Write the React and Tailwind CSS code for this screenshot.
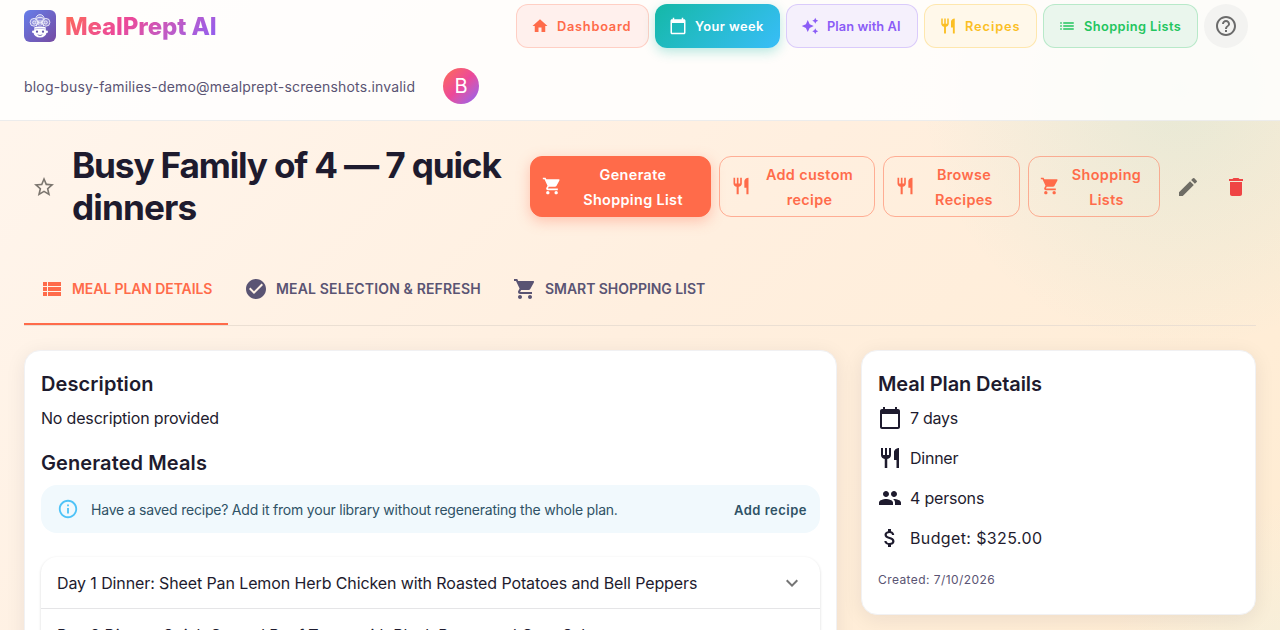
import React from "react";
import {
    MdHome, MdAutoAwesome, MdList, MdHelpOutline, MdStarBorder, MdShoppingCart, MdEdit, MdDelete,
    MdCheckCircle, MdExpandMore, MdPeople, MdAttachMoney, MdInfoOutline
} from "react-icons/md";

const CalendarIcon = ({size = 24, className}) => (
    <svg width={size} height={size} viewBox="0 0 24 24" fill="currentColor" className={className}>
        <path d="M20 3h-1V1h-2v2H7V1H5v2H4c-1.1 0-2 .9-2 2v16c0 1.1.9 2 2 2h16c1.1 0 2-.9 2-2V5c0-1.1-.9-2-2-2zm0 18H4V8h16v13z"/>
    </svg>
);

const RestaurantIcon = ({size = 24, className}) => (
    <svg width={size} height={size} viewBox="0 0 24 24" fill="currentColor" className={className}>
        <path d="M11 9H9V2H7v7H5V2H3v7c0 2.12 1.66 3.84 3.75 3.97V22h2.5v-9.03C11.34 12.84 13 11.12 13 9V2h-2v7zm5-3v8h2.5v8H21V2c-2.76 0-5 2.24-5 4z"/>
    </svg>
);

const ViewListIcon = ({size = 24, className}) => (
    <svg width={size} height={size} viewBox="0 0 24 24" fill="currentColor" className={className}>
        <path d="M3 14h4v-4H3v4zm0 5h4v-4H3v4zM3 9h4V5H3v4zm5 5h13v-4H8v4zm0 5h13v-4H8v4zM8 5v4h13V5H8z"/>
    </svg>
);

const navItems = [
    {label: "Dashboard", icon: MdHome, box: "w-[133px] pl-3.5 border border-[#ff6b4a]/25 bg-[#fff0ed] text-[#ff6b4a]", text: "tracking-[0.75px]"},
    {label: "Your week", icon: CalendarIcon, box: "w-[125px] pl-[13px] border border-transparent bg-linear-135 from-[#14b8a6] to-[#38bdf8] bg-origin-border text-white shadow-[0_4px_12px_rgba(20,184,166,0.3)]", text: "tracking-[0.45px]"},
    {label: "Plan with AI", icon: MdAutoAwesome, box: "w-[132px] pl-3.5 border border-[#8b5cf6]/25 bg-[#f5f0fc] text-[#8b5cf6]", text: "tracking-[0.08px]"},
    {label: "Recipes", icon: RestaurantIcon, box: "w-[113px] pl-3.5 border border-[#fbbf24]/30 bg-[#fff8ea] text-[#fbbf24]", text: "tracking-[0.9px]"},
    {label: "Shopping Lists", icon: MdList, box: "w-[155px] pl-3.5 border border-[#22c55e]/25 bg-[#eaf6ed] text-[#22c55e]", text: "tracking-[0.42px]"},
];

const actions = [
    {lines: ["Generate", "Shopping List"], icon: MdShoppingCart, box: "w-[181px] border-[#ff6b4a] bg-[#ff6b4a] text-white shadow-[0_4px_14px_rgba(255,107,74,0.35)]"},
    {lines: ["Add custom", "recipe"], icon: RestaurantIcon, box: "w-[156px] border-[#ff6b4a]/50 text-[#ff6b4a]"},
    {lines: ["Browse", "Recipes"], icon: RestaurantIcon, box: "w-[137px] border-[#ff6b4a]/50 text-[#ff6b4a]"},
    {lines: ["Shopping", "Lists"], icon: MdShoppingCart, box: "w-[132px] border-[#ff6b4a]/50 text-[#ff6b4a]"},
];

const tabs = [
    {label: "MEAL PLAN DETAILS", icon: ViewListIcon, box: "w-[204px] border-[#ff6b4a] text-[#ff6b4a]", text: "tracking-[-0.1px]"},
    {label: "MEAL SELECTION & REFRESH", icon: MdCheckCircle, box: "w-[269px] border-transparent text-[#5a5473]", text: "tracking-[0.15px]"},
    {label: "SMART SHOPPING LIST", icon: MdShoppingCart, box: "w-[224px] border-transparent text-[#5a5473]", text: "tracking-[-0.05px]"},
];

const details = [
    {label: "7 days", icon: CalendarIcon, text: "tracking-[-0.25px]"},
    {label: "Dinner", icon: RestaurantIcon, text: "tracking-[-0.25px]"},
    {label: "4 persons", icon: MdPeople, text: "tracking-[-0.2px]"},
    {label: "Budget: $325.00", icon: MdAttachMoney, text: "tracking-[0.37px]"},
];

const meals = [
    "Day 1 Dinner: Sheet Pan Lemon Herb Chicken with Roasted Potatoes and Bell Peppers",
    "Day 2 Dinner: Quick Ground Beef Tacos with Black Beans and Corn Salsa",
];

const ChefLogo = () => (
    <svg width="32" height="32" viewBox="0 0 32 32" fill="none" className="shrink-0">
        <defs>
            <linearGradient id="logoBg" x1="0" y1="0" x2="32" y2="32" gradientUnits="userSpaceOnUse">
                <stop stopColor="#667eea"/>
                <stop offset="1" stopColor="#764ba2"/>
            </linearGradient>
        </defs>
        <rect width="32" height="32" rx="6" fill="url(#logoBg)"/>
        {/* hat */}
        <g stroke="white" strokeOpacity="0.85" strokeWidth="0.9" fill="white" fillOpacity="0.22">
            <circle cx="10" cy="12.3" r="3.9"/>
            <circle cx="22" cy="12.3" r="3.9"/>
            <circle cx="16" cy="8.8" r="4.2"/>
            <circle cx="10.2" cy="12.5" r="1.6"/>
            <circle cx="21.8" cy="12.5" r="1.6"/>
            <path d="M12.6 8.4C14 7 18 7 19.4 8.4"/>
            <path d="M14.4 10.4V15.4M17.6 10.4V15.4M16 10V16M12.5 16.3L13 13M19.5 16.3L19 13"/>
        </g>
        <path d="M10.3 17.2C13 16.1 19 16.1 21.7 17.2V20H10.3Z" fill="white"/>
        {/* face */}
        <ellipse cx="16" cy="22.4" rx="6.5" ry="5.2" fill="white"/>
        <circle cx="9.2" cy="21.8" r="1.2" fill="white"/>
        <circle cx="22.8" cy="21.8" r="1.2" fill="white"/>
        <path d="M10.8 19C13 18.2 19 18.2 21.2 19" stroke="#8a7fd0" strokeWidth="0.5"/>
        <circle cx="13" cy="21.7" r="1.1" fill="#6157a8"/>
        <circle cx="19" cy="21.7" r="1.1" fill="#6157a8"/>
        <path d="M13.7 24.6C15 25.8 17 25.8 18.3 24.6" stroke="#6157a8" strokeWidth="0.8"/>
    </svg>
);

const Header = () => (
    <header className="h-[121px] shrink-0 border-b border-[#ececec] bg-white/85 pt-1 pr-8 pl-6">
        <div className="flex h-11 items-center justify-between">
            <div className="flex items-center gap-[9px]">
                <ChefLogo/>
                <span className="bg-linear-135 from-[#ff6b4a] via-[#ec4899] via-40% to-[#8b5cf6] bg-clip-text pt-0.5 text-2xl font-extrabold tracking-[-0.1px] whitespace-nowrap text-transparent">MealPrept AI</span>
            </div>
            <nav className="flex gap-1.5">
                {navItems.map(({label, icon: Icon, box, text}) => (
                    <button key={label} className={`flex h-11 items-center gap-2 rounded-xl font-semibold whitespace-nowrap ${box}`}>
                        <Icon size={18} className="shrink-0"/>
                        <span className={`pt-0.5 text-[12.8px] ${text}`}>{label}</span>
                    </button>
                ))}
                <button className="flex size-11 items-center justify-center rounded-full bg-[#f3f3f1] text-[#6b6b6b]">
                    <MdHelpOutline size={24}/>
                </button>
            </nav>
        </div>
        <div className="mt-5 flex h-9 items-center">
            <span className="w-[419px] pt-0.5 text-sm tracking-[0.175px] text-[#5a5473]">blog-busy-families-demo@mealprept-screenshots.invalid</span>
            <span className="flex size-9 items-center justify-center rounded-full bg-linear-135 from-[#ff6b4a] via-[#ec4899] to-[#8b5cf6] text-xl text-white">B</span>
        </div>
    </header>
);

const PlanTitle = () => (
    <div className="mt-[23px] flex h-[84px] items-center">
        <button className="flex size-10 items-center justify-center pt-0.5 text-[#7c766f]">
            <MdStarBorder size={24}/>
        </button>
        <h1 className="ml-2 w-[458px] text-[35.2px] leading-[42px] font-bold tracking-[-1.17px] text-[#1e1b2e]">
            Busy Family of 4 — 7 quick<br/><span className="tracking-[-0.9px]">dinners</span>
        </h1>
        <div className="flex gap-2">
            {actions.map(({lines, icon: Icon, box}) => (
                <button key={lines.join(" ")} className={`flex h-[61px] items-center rounded-xl border pr-3.5 pl-[11px] text-[14.4px] leading-[25px] font-semibold ${box}`}>
                    <Icon size={20} className="shrink-0"/>
                    <span className="ml-2 flex-1 pt-0.5 text-center tracking-[0.36px] whitespace-nowrap">
                        {lines[0]}<br/>{lines[1]}
                    </span>
                </button>
            ))}
            <button className="flex size-10 items-center justify-center self-center pt-0.5 text-[#6f6d65]">
                <MdEdit size={24}/>
            </button>
            <button className="flex size-10 items-center justify-center self-center pt-0.5 text-[#ef4444]">
                <MdDelete size={24}/>
            </button>
        </div>
    </div>
);

const Tabs = () => (
    <div className="mt-[25px] flex h-[73px] border-b border-[#ebdfd3]">
        {tabs.map(({label, icon: Icon, box, text}) => (
            <button key={label} className={`flex h-[72px] items-center gap-2 border-b-2 px-4 pt-0.5 text-sm font-semibold whitespace-nowrap ${box}`}>
                <Icon size={24} className="shrink-0"/>
                <span className={text}>{label}</span>
            </button>
        ))}
    </div>
);

const MealsCard = () => (
    <section className="h-[420px] w-[813px] rounded-2xl border border-[#f1f1f3] bg-white px-4 pt-[17px] shadow-[0_4px_20px_rgba(30,27,46,0.08)]">
        <h2 className="text-xl leading-8 font-semibold tracking-[0.1px]">Description</h2>
        <p className="mt-1.5 leading-6 tracking-[-0.18px]">No description provided</p>
        <h2 className="mt-[17px] text-xl leading-8 font-semibold tracking-[0.1px]">Generated Meals</h2>
        <div className="mt-1.5 flex h-12 items-center rounded-2xl bg-[#f1f9fd] pr-[13px] pl-4 text-[#2f5266]">
            <MdInfoOutline size={22} className="text-[#4fc3f7]"/>
            <span className="ml-3 flex-1 pt-0.5 text-sm tracking-[-0.21px] whitespace-nowrap">Have a saved recipe? Add it from your library without regenerating the whole plan.</span>
            <button className="pt-[3px] text-[13px] font-semibold tracking-[0.5px]">Add recipe</button>
        </div>
        <div className="mt-6 rounded-2xl shadow-[0_1px_3px_rgba(0,0,0,0.16)]">
            {meals.map((meal) => (
                <div key={meal} className="flex h-[52px] items-center justify-between border-b border-[#e5e5e7] px-4">
                    <span className="tracking-[-0.11px] whitespace-nowrap">{meal}</span>
                    <MdExpandMore size={24} className="text-[#757575]"/>
                </div>
            ))}
        </div>
    </section>
);

const DetailsCard = () => (
    <section className="h-[265px] w-[395px] rounded-2xl border border-[#f1f1f3] bg-white px-4 pt-[17px] shadow-[0_4px_20px_rgba(30,27,46,0.08)]">
        <h2 className="text-xl leading-8 font-semibold tracking-[-0.1px]">Meal Plan Details</h2>
        <ul className="mt-1.5 flex flex-col gap-4">
            {details.map(({label, icon: Icon, text}) => (
                <li key={label} className="flex h-6 items-center gap-2">
                    <Icon size={24}/>
                    <span className={text}>{label}</span>
                </li>
            ))}
        </ul>
        <p className="mt-5 text-xs leading-5 tracking-[0.42px] text-[#5a5473]">Created: 7/10/2026</p>
    </section>
);

export default function App() {
    return (
        <div className="flex h-[630px] w-[1280px] flex-col overflow-hidden bg-[radial-gradient(circle_at_1180px_90px,rgba(20,184,166,0.10),transparent_260px),radial-gradient(circle_at_1300px_700px,rgba(230,245,235,0.45),transparent_200px),linear-gradient(135deg,#fff6ee_0%,#ffefdf_50%,#ffecd2_100%)] font-['Inter','Liberation_Sans',sans-serif] text-[#1e1b2e]">
            <Header/>
            <main className="px-6">
                <PlanTitle/>
                <Tabs/>
                <div className="mt-6 flex items-start gap-6">
                    <MealsCard/>
                    <DetailsCard/>
                </div>
            </main>
        </div>
    );
}
